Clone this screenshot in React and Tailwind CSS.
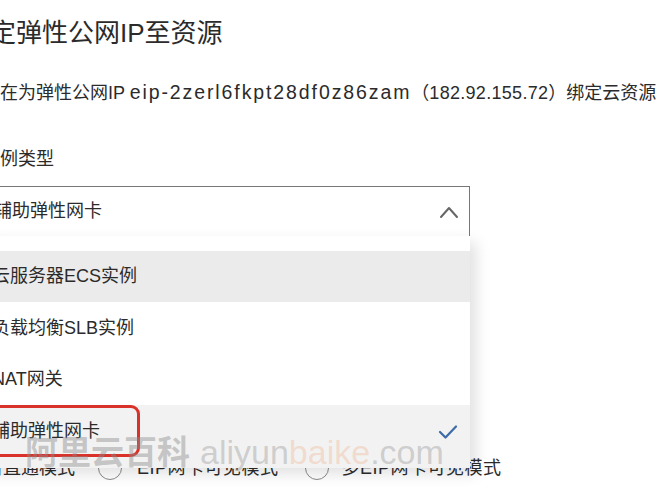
import React from "react";

const font = { fontFamily: '"Liberation Sans", "Noto Sans CJK SC", sans-serif' };

function Chevron() {
  return (
    <svg width="20" height="14" viewBox="0 0 20 14" fill="none">
      <path d="M2 12 L10 3 L18 12" stroke="#666" strokeWidth="2" strokeLinecap="round" strokeLinejoin="round" />
    </svg>
  );
}

function Check() {
  return (
    <svg width="20" height="16" viewBox="0 0 20 16" fill="none">
      <path d="M2 8 L7.5 13.5 L18 2.5" stroke="#3d6aa8" strokeWidth="2.2" strokeLinecap="round" strokeLinejoin="round" />
    </svg>
  );
}

function Radio() {
  return <span className="block w-[24px] h-[24px] rounded-full border-[1.5px] border-[#8a8a8a] bg-white shrink-0" />;
}

export default function App() {
  const items = [
    { t: "云服务器ECS实例", cls: "bg-[#ebebeb] h-[51px]" },
    { t: "负载均衡SLB实例", cls: "bg-white h-[52px]" },
    { t: "NAT网关", cls: "bg-white h-[51px]" },
    { t: "辅助弹性网卡", cls: "bg-[#f2f2f2] h-[63px] pb-[10px]", sel: true },
  ];
  return (
    <div className="relative w-[666px] h-[500px] overflow-hidden bg-white text-[#2b2b2b]" style={font}>
      <div className="-ml-[18px] flex flex-col">
        <div className="-ml-[18px] mt-[15px] text-[26px] leading-[36px] whitespace-nowrap">绑定弹性公网IP至资源</div>
        <div className="mt-[28px] text-[18px] leading-[26px] whitespace-nowrap">
          正在为弹性公网IP <span className="text-[19.5px] tracking-[1.9px]">eip-2zerl6fkpt28df0z86zam</span>（<span className="tracking-[0.3px]">182.92.155.72</span>）绑定云资源
        </div>
        <div className="mt-[40px] text-[18px] leading-[26px] whitespace-nowrap">实例类型</div>
        <div className="mt-[14px] w-[488px] h-[51px] border-[1.5px] border-[#777] flex items-center justify-between pl-[11px] pr-[10px] text-[18px]">
          <span>辅助弹性网卡</span>
          <Chevron />
        </div>
        <div className="mt-[218px] -ml-[15px] flex items-center text-[18px] leading-[26px] whitespace-nowrap">
          <span>独占直通模式</span>
          <span className="ml-[23px] mr-[15px]"><Radio /></span>
          <span className="tracking-[0.5px]">EIP网卡可见模式</span>
          <span className="ml-[26px] mr-[13px]"><Radio /></span>
          <span className="tracking-[0.5px]">多EIP网卡可见模式</span>
        </div>
      </div>

      {/* dropdown overlay */}
      <div className="absolute left-[-18px] top-[236px] w-[488px] bg-white pt-[15px] shadow-[6px_6px_14px_rgba(0,0,0,0.12)]">
        {items.map((it) => (
          <div key={it.t} className={`${it.cls} flex items-center justify-between pl-[10px] pr-[12px] text-[18px] whitespace-nowrap`}>
            <span>{it.t}</span>
            {it.sel && <Check />}
          </div>
        ))}
      </div>

      {/* red annotation box */}
      <div className="absolute left-[-20px] top-[405px] w-[160px] h-[52px] border-[3px] border-[#d8322a] rounded-[9px]" />

      {/* watermark */}
      <div className="absolute left-[25px] top-[427px] flex items-baseline whitespace-nowrap pointer-events-none">
        <span className="text-[33px] font-bold text-[rgba(140,140,140,0.45)]">阿里云百科</span>
        <span className="ml-[10px] text-[34px] text-[rgba(160,160,160,0.45)]">aliyun</span>
        <span className="text-[34px] text-[rgba(240,190,160,0.45)]">baike</span>
        <span className="text-[34px] text-[rgba(160,160,160,0.45)]">.com</span>
      </div>
    </div>
  );
}
